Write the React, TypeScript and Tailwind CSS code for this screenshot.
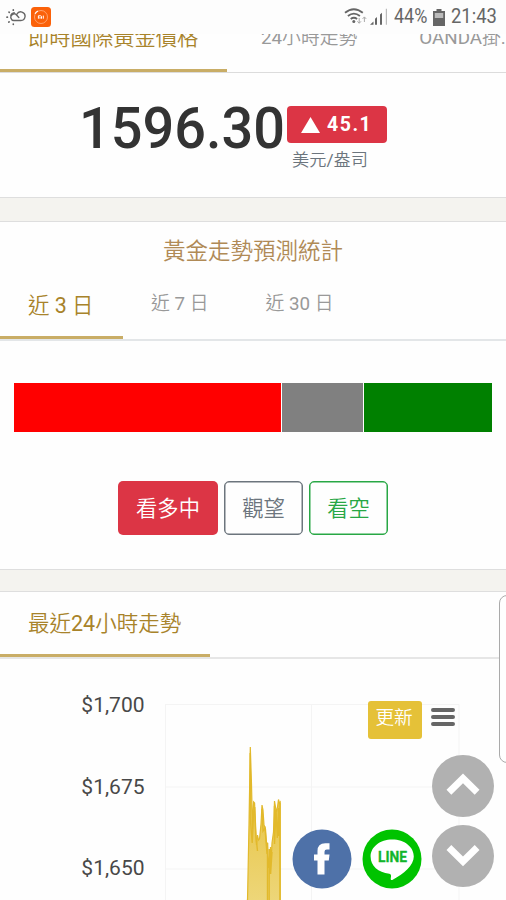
import React from 'react'

const goldTab = 'text-[#a8832a]'

const stats = [
  { name: 'up', width: 268, color: 'bg-[#ff0000]' },
  { name: 'flat', width: 82, color: 'bg-[#808080]' },
  { name: 'down', width: 128, color: 'bg-[#008000]' },
]

const yTicks = [
  { label: '$1,700', y: 45 },
  { label: '$1,675', y: 127 },
  { label: '$1,650', y: 208.5 },
]

const StatusBar = () => (
  <header className="relative z-10 flex h-[34px] shrink-0 items-center justify-between bg-[#fdfdfd]">
    <div className="flex items-center pl-[6px]">
      <svg width="20" height="18" viewBox="0 0 20 18" fill="none" stroke="#666" strokeWidth="1.4" strokeLinecap="round">
        <path d="m12.800 9.500-2-2.200a3.300 3.300 0 1 0-2.200 5.200h6.300a4.300 4.300 0 1 0-4-6.200" />
        <path d="M4.800 7.200q.8-2.200 3.400-2.500" />
        <path d="M7.300 1.800v.4M3 4.100l.3.3M1 9.200h.4M2.800 14.200l.3-.3M7.300 16v.3" strokeWidth="1.7" />
      </svg>
      <svg className="ml-[5px]" width="20" height="20" viewBox="0 0 20 20">
        <rect width="20" height="20" rx="3.5" fill="#fb6109" />
        <circle cx="10" cy="10" r="6.5" fill="none" stroke="#ffb184" strokeWidth="0.8" />
        <path d="M4 6.800A6.800 6.800 0 0 1 7 4" stroke="#fff" strokeWidth="1.3" fill="none" />
        <path d="M7.400 11.700V8.800h2.300q.8 0 .8.800v2.100M9 10v1.700M12.300 8.600v3.100" stroke="#fff" strokeWidth="1" fill="none" />
      </svg>
    </div>
    <div className="flex items-center pr-[9px] text-[#666]">
      <svg width="44" height="20" viewBox="0 0 44 20" fill="none" stroke="#666">
        <path d="M1 5.800q8.800-7.200 17.800 0M3.900 9q6-4.800 12 0M6.700 12q3.200-2.500 6.400 0" strokeWidth="1.8" />
        <circle cx="9.8" cy="14.4" r="1.5" fill="#666" stroke="none" />
        <path d="M15.200 11v5M13.400 14.300l1.800 2 1.800-2M20.400 15v-5M18.600 11.900l1.800-2 1.800 2" stroke="#aaa" />
        <path d="M26 17.800l3.500-3.300v3.300zM31 17.800v-6l2-1.700v7.700zM36 17.800V7.400l2-1.600v12z" fill="#666" stroke="none" />
        <path d="M42.400 1.800v16" stroke="#bbb" strokeWidth="1.2" />
      </svg>
      <span className="ml-[6px] w-[33px] origin-left scale-x-[0.92] whitespace-nowrap text-[19.5px] leading-[34px]">44%</span>
      <svg className="ml-[6px]" width="12" height="17" viewBox="0 0 12 17">
        <path d="M3.500 0h5v2H12v15H0V2h3.500z" fill="#666" />
        <path d="M1.800 4h8.400v5H1.800z" fill="#bbb" />
      </svg>
      <span className="ml-[6px] w-[46px] origin-left scale-x-[0.93] whitespace-nowrap text-[19.8px] leading-[34px]">21:43</span>
    </div>
  </header>
)

const PricePanel = () => (
  <section className="h-[164px] shrink-0 border-b border-[#dedede] bg-[#fefefe]">
    <div className="flex h-[39px] overflow-hidden border-b border-[#dcdcdc] whitespace-nowrap">
      <div className={`h-[38px] w-[227px] shrink-0 border-b-[3px] border-[#c9ad66] pl-7 ${goldTab}`}>
        <p className="-mt-[12px] text-[21.3px] leading-8">即時國際黃金價格</p>
      </div>
      <p className="-mt-[12px] ml-[34px] shrink-0 text-[18.8px] leading-8 text-[#999]">24小時走勢</p>
      <p className="-mt-[12px] ml-[62px] shrink-0 text-[18.8px] leading-8 text-[#999]">OANDA掛...</p>
    </div>
    <div className="flex pl-[79px] pt-[22px]">
      <span className="w-[208px] origin-left scale-x-[0.963] text-[58px] font-medium leading-[66px] text-[#333]">1596.30</span>
      <div className="pt-[11px]">
        <div className="flex h-[37px] w-[100px] items-center rounded bg-[#dc3545] pl-[14px] text-white">
          <svg width="19" height="16" viewBox="0 0 19 16"><path d="M9.500 0 19 16H0z" fill="white" /></svg>
          <span className="ml-[7px] text-[19.5px] font-bold tracking-[1.5px]">45.1</span>
        </div>
        <p className="pl-[5px] pt-[5px] text-[17.2px] leading-6 text-[#6c757d]">美元/盎司</p>
      </div>
    </div>
  </section>
)

const ForecastPanel = () => (
  <section className="mt-[23px] h-[349px] shrink-0 border-y border-[#dedede] bg-[#fefefe]">
    <h2 className="pt-[12px] text-center text-[22.5px] leading-[34px] text-[#b08a56]">黃金走勢預測統計</h2>
    <div className="flex h-[73px] border-b-2 border-[#e3e6e8] text-[18.8px] text-[#999]">
      <div className={`h-[71px] w-[123px] border-b-[3px] border-[#c9ad66] pl-7 pt-[22px] text-[21.4px] leading-8 ${goldTab}`}>近 3 日</div>
      <div className="pl-7 pt-[20px] leading-8">近 7 日</div>
      <div className="pl-[57px] pt-[20px] leading-8">近 30 日</div>
    </div>
    <div className="mx-[14px] mt-[42px] flex h-[49px]">
      {stats.map((item) => (
        <div key={item.name} className={`border-r border-white last:border-r-0 ${item.color}`} style={{ width: item.width }}></div>
      ))}
    </div>
    <div className="mt-[49px] flex gap-[6px] pl-[118px] text-[21.3px]">
      <button className="h-[54px] w-[100px] rounded-[5px] bg-[#dc3545] pt-[2px] text-white">看多中</button>
      <button className="h-[54px] w-[79px] rounded-[5px] border border-[#6c757d] pt-[2px] text-[#6c757d] ring-[0.5px] ring-inset ring-[#6c757d]">觀望</button>
      <button className="h-[54px] w-[79px] rounded-[5px] border border-[#28a745] pt-[2px] text-[#28a745] ring-[0.5px] ring-inset ring-[#28a745]">看空</button>
    </div>
  </section>
)

const TrendPanel = () => (
  <section className="relative mt-[21px] flex-1 border-t border-[#dedede] bg-[#fefefe]">
    <div className="h-[67px] border-b-2 border-[#e6e6e6]">
      <div className={`h-[65px] w-[210px] border-b-[3px] border-[#c9ad66] pl-7 pt-[16px] text-[21.5px] leading-8 ${goldTab}`}>最近24小時走勢</div>
    </div>
    <svg width="506" height="242" viewBox="0 0 506 242">
      <defs>
        <linearGradient id="gold" x1="0" y1="0" x2="0" y2="1">
          <stop offset="0" stopColor="#e6bd2d" />
          <stop offset="1" stopColor="#edd679" />
        </linearGradient>
      </defs>
      <path d="M165 45.500h294M165 128h294M165 210h294M165.500 45.500v197M311.500 45.500v197M459 45.500v197" stroke="#f4f4f4" fill="none" />
      {yTicks.map((tick) => (
        <text key={tick.label} x="144.500" y={tick.y + 7.5} textAnchor="end" fontSize="21" fill="#484848">{tick.label}</text>
      ))}
      <path
        d="M246 242 247.500 241 249 165 250.300 88 251.500 125 252.500 170 253.600 143 254.600 144 255.500 170 256.500 186 257.500 176 258.500 181 259.500 180 261 165 262 146 263 151 264 166 265.500 170 266.500 184 267.500 184 268.500 209 270 192 271 204 272 184 273.500 173 274.500 142 275.500 148 276.500 153 277.500 148 278.500 140.500 279.300 144 280.200 143V242z"
        fill="url(#gold)"
        stroke="#e2b92b"
        strokeWidth="1.2"
      />
      <path d="M250.200 94v64l2 26 1.300-30 1.200-6 1.300 30 1.500 14M262 150l1 22 2-3 2 26M267.500 184v58M269.200 190v52M270.600 188v27l1.400-22M274.500 147v38l1.500-34 1.300 28 1.400-30v28M280 144v98" stroke="#e2b92b" fill="none" strokeWidth="1.4" />
    </svg>
    <button className="absolute left-[368px] top-[109px] h-[38px] w-[54px] rounded-[3px] bg-[#e5c138] pb-[3px] pr-[2px] text-[18.6px] leading-[35px] text-white">更新</button>
    <svg className="absolute left-[430px] top-[115px]" width="26" height="21" viewBox="0 0 26 21">
      <path d="M3 3h20M3 10h20M3 17h20" stroke="#666" strokeWidth="4" strokeLinecap="round" />
    </svg>
  </section>
)

const FloatingButtons = () => (
  <>
    <div className="absolute left-[499px] top-[595px] h-[168px] w-[20px] rounded-[8px] border border-[#aaa] bg-[#fefefe]"></div>
    <svg className="absolute left-[432px] top-[755px]" width="62" height="62" viewBox="0 0 62 62">
      <circle cx="31" cy="31" r="31" fill="#b1b1b1" />
      <path d="m31 18.500 16.500 16.200-4.800 5L31 28.300 19.300 39.700l-4.800-5z" fill="white" />
    </svg>
    <svg className="absolute left-[432px] top-[825px]" width="62" height="62" viewBox="0 0 62 62">
      <circle cx="31" cy="31" r="31" fill="#b1b1b1" />
      <path d="m31 41.300 16.500-16.200-4.800-5L31 31.500 19.300 20.100l-4.800 5z" fill="white" />
    </svg>
    <svg className="absolute left-[292px] top-[829px]" width="60" height="60" viewBox="0 0 60 60">
      <circle cx="30" cy="30" r="29.500" fill="#4e71a8" />
      <path d="M25.500 45.500V31.500h-3.500v-6h3.500V22q0-7.800 7.800-7.800h4.200v6.300h-2.700q-2.300 0-2.300 2.300v2.700h5l-.7 6h-4.300v14z" fill="white" />
    </svg>
    <svg className="absolute left-[362px] top-[829px]" width="60" height="60" viewBox="0 0 60 60">
      <circle cx="30" cy="30" r="29.500" fill="#00c300" />
      <path d="M30.300 10.500c12.300 0 21.500 7.500 21.500 17 0 8.700-10 17.500-21.500 23.400-1.300.5-1.800-.4-1.500-2 .4-2.300.6-3.800-1.500-4.200C16.200 43.500 8.600 37 8.600 27.500c0-9.500 9.400-17 21.700-17z" fill="white" />
      <text x="30.500" y="33" textAnchor="middle" textLength="29" lengthAdjust="spacingAndGlyphs" fontSize="15.500" fontWeight="700" fill="#12b52c" stroke="#12b52c" strokeWidth="0.3">LINE</text>
    </svg>
  </>
)

const App = () => {
  return (
    <div className="relative flex h-[900px] w-[506px] flex-col overflow-hidden bg-[#f4f3ef] font-[Roboto,'Noto_Sans_CJK_TC_DemiLight','Noto_Sans_CJK_TC',sans-serif]">
      <StatusBar />
      <PricePanel />
      <ForecastPanel />
      <TrendPanel />
      <FloatingButtons />
    </div>
  )
}

export default App
